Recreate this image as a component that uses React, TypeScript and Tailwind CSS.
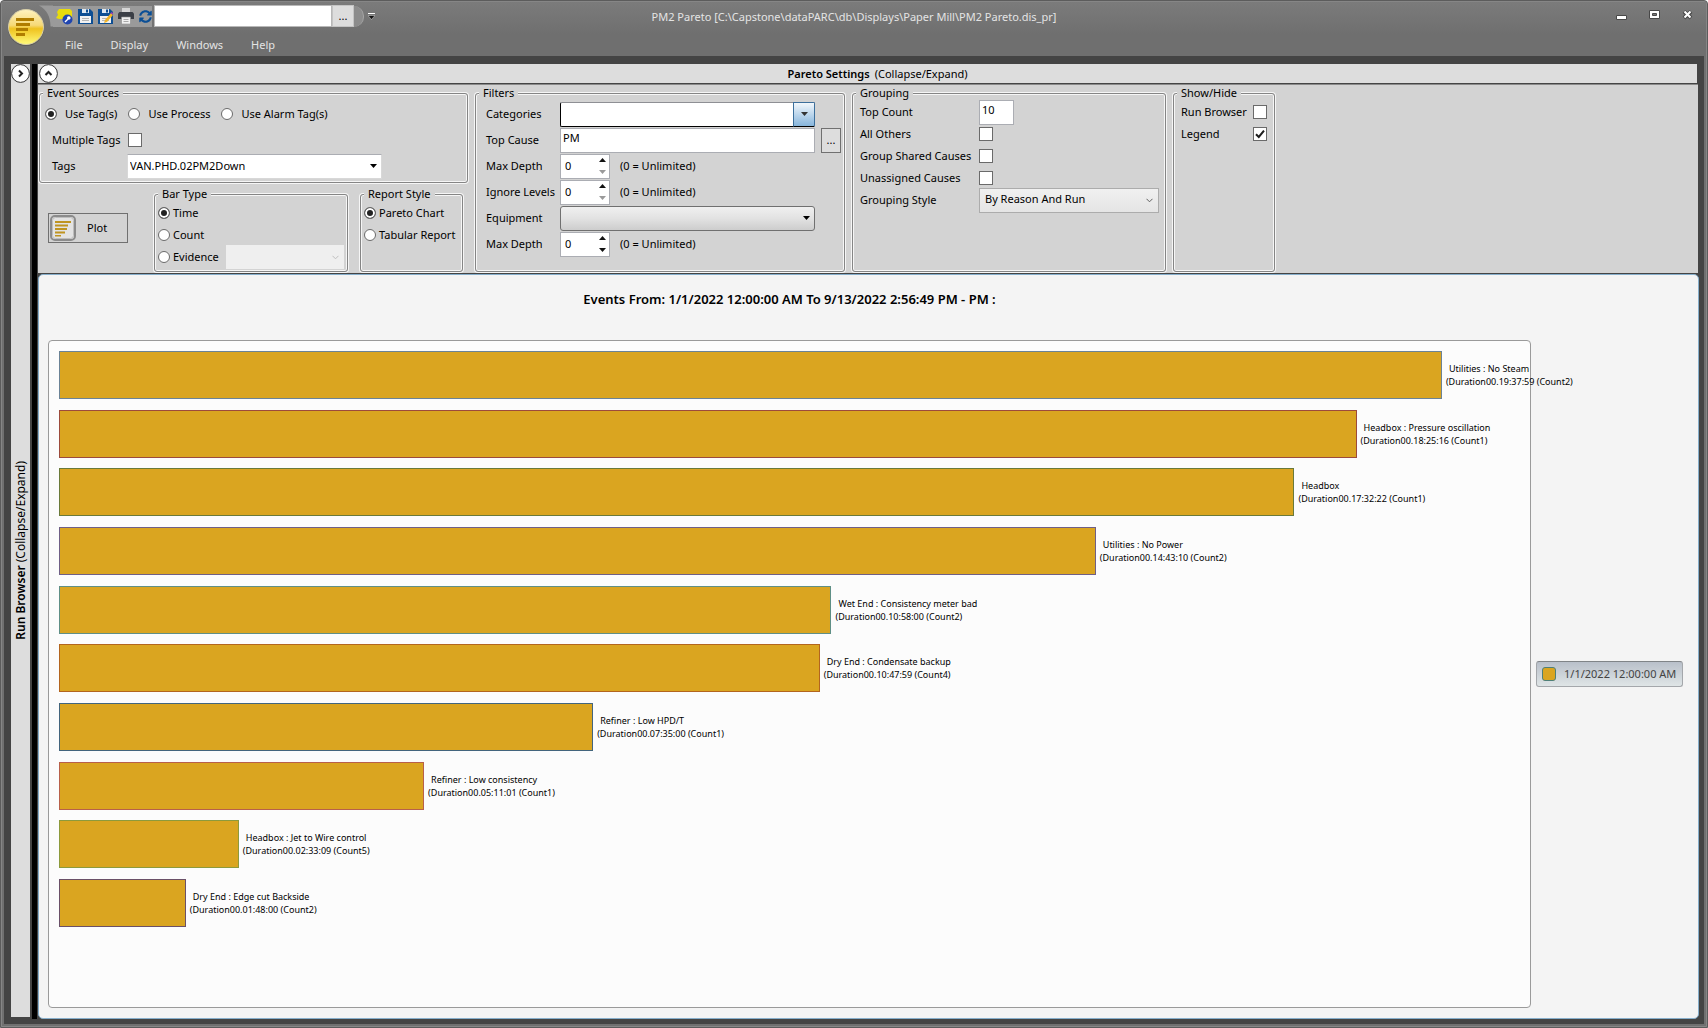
import type { ReactNode } from 'react';
import { FaSyncAlt } from 'react-icons/fa';

const bars = [
    { cause: 'Utilities : No Steam', duration: '19:37:59', count: 2, edge: 'border-[#6b8396]' },
    { cause: 'Headbox : Pressure oscillation', duration: '18:25:16', count: 1, edge: 'border-[#9c4a3c]' },
    { cause: 'Headbox', duration: '17:32:22', count: 1, edge: 'border-[#6a7a3a]' },
    { cause: 'Utilities : No Power', duration: '14:43:10', count: 2, edge: 'border-[#6f5f86]' },
    { cause: 'Wet End : Consistency meter bad', duration: '10:58:00', count: 2, edge: 'border-[#5f8f86]' },
    { cause: 'Dry End : Condensate backup', duration: '10:47:59', count: 4, edge: 'border-[#b3651e]' },
    { cause: 'Refiner : Low HPD/T', duration: '07:35:00', count: 1, edge: 'border-[#43657d]' },
    { cause: 'Refiner : Low consistency', duration: '05:11:01', count: 1, edge: 'border-[#b8604a]' },
    { cause: 'Headbox : Jet to Wire control', duration: '02:33:09', count: 5, edge: 'border-[#8c9a3c]' },
    { cause: 'Dry End : Edge cut Backside', duration: '01:48:00', count: 2, edge: 'border-[#6a5068]' },
];

// seconds that would fill the whole plot width
const AXIS_MAX = 74670;

function seconds(duration: string) {
    const [h, m, s] = duration.split(':').map(Number);
    return h * 3600 + m * 60 + s;
}

const radioClass =
    'appearance-none shrink-0 size-3 rounded-full border border-[#6a6a6a] bg-white checked:bg-[#222] checked:shadow-[inset_0_0_0_2px_#fff]';

interface GroupProps {
    title: string;
    className: string;
    bodyClass: string;
    children: ReactNode;
}

function Group({ title, className, bodyClass, children }: GroupProps) {
    return (
        <fieldset
            className={
                'min-w-0 rounded-[3px] border border-[#858585] shadow-[0_0_0_1px_#f6f6f6,inset_0_0_0_1px_#f6f6f6] ' + className
            }
        >
            <legend className="ml-[3px] px-1 h-4 bg-[#d3d3d3]">{title}</legend>
            <div className={bodyClass}>{children}</div>
        </fieldset>
    );
}

function Radio({ name, label, checked, className }: { name: string; label: string; checked?: boolean; className: string }) {
    return (
        <label className={'flex items-center ' + className}>
            <input type="radio" name={name} defaultChecked={checked} className={radioClass} />
            {label}
        </label>
    );
}

function Check({ id, checked }: { id: string; checked?: boolean }) {
    return (
        <span className="grid w-[14px] h-[14px] shrink-0">
            <input
                type="checkbox"
                id={id}
                defaultChecked={checked}
                className="peer appearance-none col-start-1 row-start-1 border border-[#6a6a6a] bg-white"
            />
            <svg
                viewBox="0 0 14 14"
                className="col-start-1 row-start-1 hidden peer-checked:block pointer-events-none"
                fill="none"
                stroke="#1c1c1c"
                strokeWidth="2"
            >
                <path d="M3 7.2 5.8 10 11 3.6" />
            </svg>
        </span>
    );
}

function Spinner({ id, canDecrease }: { id: string; canDecrease?: boolean }) {
    return (
        <div className="flex w-[50px] h-[25px] border border-[#abadb3] bg-white">
            <input id={id} defaultValue="0" className="flex-1 min-w-0 pl-1 outline-none" />
            <div className="flex flex-col w-[14px]">
                <button type="button" aria-label="Increase" className="flex-1 flex items-center justify-center">
                    <svg width="7" height="4" viewBox="0 0 7 4">
                        <path d="M0 4 3.5 0 7 4z" fill="#111" />
                    </svg>
                </button>
                <button
                    type="button"
                    aria-label="Decrease"
                    className={'flex-1 flex items-center justify-center ' + (canDecrease ? 'text-[#111]' : 'text-[#9a9a9a]')}
                >
                    <Arrow />
                </button>
            </div>
        </div>
    );
}

function Arrow() {
    return (
        <svg width="7" height="4" viewBox="0 0 7 4">
            <path d="M0 0 3.5 4 7 0z" fill="currentColor" />
        </svg>
    );
}

function Chevron() {
    return (
        <svg width="7" height="5" viewBox="0 0 7 5" fill="none" stroke="currentColor">
            <path d="M.5 .8 3.5 3.8 6.5 .8" />
        </svg>
    );
}

interface DropdownProps {
    id: string;
    option?: string;
    disabled?: boolean;
    className: string;
    arrow: ReactNode;
    arrowClass: string;
}

function Dropdown({ id, option = '', disabled, className, arrow, arrowClass }: DropdownProps) {
    return (
        <div className="grid w-fit">
            <select
                id={id}
                aria-label={id}
                disabled={disabled}
                className={'appearance-none col-start-1 row-start-1 outline-none ' + className}
            >
                <option>{option}</option>
            </select>
            <span
                className={
                    'col-start-1 row-start-1 justify-self-end flex items-center justify-center pointer-events-none ' + arrowClass
                }
            >
                {arrow}
            </span>
        </div>
    );
}

function Orb() {
    return (
        <svg width="38" height="38" viewBox="0 0 38 38">
            <defs>
                <linearGradient id="orb" x1="0" y1="0" x2="0" y2="1">
                    <stop offset="0" stopColor="#fff3c0" />
                    <stop offset=".45" stopColor="#f6d977" />
                    <stop offset=".55" stopColor="#efc21f" />
                    <stop offset="1" stopColor="#fffb7a" />
                </linearGradient>
            </defs>
            <circle cx="19" cy="20" r="18" fill="#4c4c4c" opacity=".6" />
            <circle cx="19" cy="19" r="17.5" fill="url(#orb)" stroke="#d8cfa8" />
            <path d="M9 10h18v3H9zM9 15h14v3H9zM9 20h12v3H9zM9 25h9v3H9z" fill="#b07d00" />
        </svg>
    );
}

function OpenIcon() {
    return (
        <svg width="17" height="17" viewBox="0 0 17 17">
            <path d="M3 1h11l2 2v7l-3 1H3L0 10l2-3-1-3z" fill="#e8dc0c" />
            <circle cx="11.500" cy="11.500" r="5" fill="#1f45b0" />
            <circle cx="12.800" cy="10" r="1.800" fill="#fff" />
            <path d="M12 11 9 14" stroke="#fff" strokeWidth="1.400" />
        </svg>
    );
}

function SaveIcon({ edit }: { edit?: boolean }) {
    return (
        <svg width="15" height="16" viewBox="0 0 15 16">
            <path d="M0 1h12l3 3v12H0z" fill="#0e4f94" />
            <path d="M4 1h7v4H4z" fill="#dfe8f0" />
            <path d="M8 1.500h2v3H8z" fill="#0e4f94" />
            <path d="M2 8h11v7H2z" fill="#f2f2f2" />
            <path d="M4 10.500h7M4 12.500h7" stroke="#b5b5b5" />
            {edit && (
                <>
                    <path d="m6 15 1-3 6-7 2 2-6 7z" fill="#f0b429" />
                    <path d="m12.500 5.500 1-1.500 1.500 1v1.500z" fill="#a13fb5" />
                </>
            )}
        </svg>
    );
}

function PrintIcon() {
    return (
        <svg width="16" height="16" viewBox="0 0 16 16">
            <path d="M4 0h8v6H4z" fill="#d6d6d6" />
            <path d="M0 5.500 1.500 4h13L16 5.500V11H0z" fill="#3b3f46" />
            <path d="M3.500 9h9v7h-9z" fill="#f0f0f0" stroke="#8a8a8a" strokeWidth=".6" />
            <path d="M5.500 11.500h5M5.500 13.500h5" stroke="#a8a8a8" />
        </svg>
    );
}

function CircleArrow({ label, path }: { label: string; path: string }) {
    return (
        <button type="button" aria-label={label} className="size-[19px] shrink-0">
            <svg width="19" height="19" viewBox="0 0 19 19" fill="none">
                <circle cx="9.500" cy="9.500" r="8.900" fill="#fff" stroke="#333" />
                <path d={path} stroke="#222" strokeWidth="2" />
            </svg>
        </button>
    );
}

function TitleBar() {
    return (
        <header className="grid grid-cols-[1fr_auto_1fr] h-[54px] bg-linear-to-b from-[#7b7b7b] to-[#6f6f6f] to-60% text-[#e4e4e4]">
            <div className="flex">
                <button type="button" aria-label="Application menu" className="w-[38px] h-[38px] ml-[5px] mt-1.5 shrink-0">
                    <Orb />
                </button>
                <div className="-ml-1.5 mt-[3px] flex flex-col">
                    <div className="flex items-center h-[22px]">
                        <svg width="14" height="22" viewBox="0 0 14 22" className="shrink-0">
                            <path d="M0 .5H14V21.500H11.500C11.500 12 8 4.500 0 .5z" fill="#9a9a9a" />
                        </svg>
                        <div className="flex items-center h-[21px] pl-[3px] gap-[5px] bg-[#9a9a9a]">
                            <button type="button" aria-label="Open">
                                <OpenIcon />
                            </button>
                            <button type="button" aria-label="Save">
                                <SaveIcon />
                            </button>
                            <button type="button" aria-label="Save as">
                                <SaveIcon edit />
                            </button>
                            <button type="button" aria-label="Print">
                                <PrintIcon />
                            </button>
                            <button type="button" aria-label="Refresh">
                                <FaSyncAlt size={13} color="#0b4f96" />
                            </button>
                        </div>
                        <input aria-label="Display path" className="ml-0.5 w-[178px] h-[22px] border border-[#b8b8b8] bg-white text-black" />
                        <button type="button" className="w-[22px] h-[22px] border border-[#c4c4c4] bg-[#dddddd] text-black">
                            ...
                        </button>
                        <span className="w-[10px] h-[21px] rounded-r-full bg-[#8c8c8c] border-r border-[#a5a5a5]"></span>
                        <button type="button" aria-label="Customize toolbar" className="ml-1">
                            <svg width="7" height="7" viewBox="0 0 7 7">
                                <path d="M0 .5h7" stroke="#fff" />
                                <path d="M0 2.500h7L3.500 6.500z" fill="#111" stroke="#ddd" strokeWidth=".5" />
                            </svg>
                        </button>
                    </div>
                    <nav className="flex items-center gap-7 pl-[26px] mt-[10px]">
                        <button type="button">File</button>
                        <button type="button">Display</button>
                        <button type="button">Windows</button>
                        <button type="button">Help</button>
                    </nav>
                </div>
            </div>
            <h1 className="mt-[7px]">PM2 Pareto [C:\Capstone\dataPARC\db\Displays\Paper Mill\PM2 Pareto.dis_pr]</h1>
            <div className="flex justify-end items-start gap-[22px] pt-[7px] pr-[13px]">
                <button type="button" aria-label="Minimize">
                    <svg width="11" height="12" viewBox="0 0 11 12">
                        <path d="M.5 6.500h10v4H.5z" fill="#fff" stroke="#484848" />
                    </svg>
                </button>
                <button type="button" aria-label="Maximize">
                    <svg width="11" height="12" viewBox="0 0 11 12">
                        <path d="M.5 1.500h10v8H.5z" fill="#fff" stroke="#484848" />
                        <path d="M3.500 4.500h4v2h-4z" fill="#777" stroke="#484848" />
                    </svg>
                </button>
                <button type="button" aria-label="Close">
                    <svg width="11" height="12" viewBox="0 0 11 12" fill="none">
                        <path d="M2 2.500 9 9M9 2.500 2 9" stroke="#484848" strokeWidth="4" />
                        <path d="M2.500 2.500 8.500 8.500M8.500 2.500 2.500 8.500" stroke="#fff" strokeWidth="2" />
                    </svg>
                </button>
            </div>
        </header>
    );
}

function RunBrowser() {
    return (
        <aside className="flex flex-col items-center w-[19px] shrink-0 bg-[#dddddd]">
            <CircleArrow label="Expand run browser" path="M8 6.500 11 9.500 8 12.500" />
            <div className="flex-1 flex items-center">
                <p className="[writing-mode:vertical-rl] rotate-180 text-[12px]">
                    <b className="font-semibold">Run Browser</b> (Collapse/Expand)
                </p>
            </div>
        </aside>
    );
}

function EventSources() {
    return (
        <Group title="Event Sources" className="h-[98px]" bodyClass="pl-[5px]">
            <div className="flex items-center h-[26px] gap-[11px]">
                <Radio name="source" label="Use Tag(s)" checked className="gap-2" />
                <Radio name="source" label="Use Process" className="gap-2" />
                <Radio name="source" label="Use Alarm Tag(s)" className="gap-2" />
            </div>
            <div className="flex items-center h-[26px] pl-[7px]">
                <label htmlFor="multiple" className="w-[76px]">
                    Multiple Tags
                </label>
                <Check id="multiple" />
            </div>
            <div className="flex items-center h-[26px] pl-[7px]">
                <label htmlFor="tags" className="w-[75px]">
                    Tags
                </label>
                <Dropdown
                    id="tags"
                    option="VAN.PHD.02PM2Down"
                    className="w-[255px] h-[25px] pl-0.5 bg-white border border-[#d8d8d8] border-t-[#abadb3]"
                    arrow={<Arrow />}
                    arrowClass="w-[18px]"
                />
            </div>
        </Group>
    );
}

function PlotControls() {
    return (
        <div className="flex items-start mt-[3px]">
            <button type="button" className="ml-[9px] mt-[27px] flex items-center w-[80px] h-[30px] pl-px gap-[11px] border border-[#707070]">
                <svg width="26" height="26" viewBox="0 0 26 26">
                    <rect x="1" y="1" width="24" height="24" rx="4" fill="#e3e3e3" stroke="#8b8b8b" strokeWidth="2" />
                    <rect x="2.500" y="2.500" width="21" height="21" rx="3" fill="none" stroke="#bdbdbd" />
                    <path d="M5 6h16v2H5zM5 9.500h13v2H5zM5 13h12v2H5zM5 16.500h10v2H5zM5 20h6v1.500H5z" fill="#bf9420" />
                </svg>
                Plot
            </button>
            <Group title="Bar Type" className="w-[194px] h-[86px] ml-[26px]" bodyClass="pl-[3px]">
                <div className="flex h-[22px]">
                    <Radio name="bar" label="Time" checked className="gap-[3px]" />
                </div>
                <div className="flex h-[22px]">
                    <Radio name="bar" label="Count" className="gap-[3px]" />
                </div>
                <div className="flex h-[22px] items-center">
                    <Radio name="bar" label="Evidence" className="gap-[3px] w-[68px]" />
                    <Dropdown
                        id="evidence"
                        disabled
                        className="w-[118px] h-[24px] bg-[#efefef]"
                        arrow={<Chevron />}
                        arrowClass="w-[18px] text-[#bfbfbf]"
                    />
                </div>
            </Group>
            <Group title="Report Style" className="w-[103px] h-[86px] ml-3" bodyClass="pl-[3px]">
                <div className="flex h-[22px]">
                    <Radio name="report" label="Pareto Chart" checked className="gap-[3px]" />
                </div>
                <div className="flex h-[22px]">
                    <Radio name="report" label="Tabular Report" className="gap-[3px]" />
                </div>
            </Group>
        </div>
    );
}

function Filters() {
    return (
        <Group title="Filters" className="w-[370px] h-[187px]" bodyClass="pl-[10px]">
            <div className="grid grid-cols-[74px_auto_1fr] auto-rows-[26px] items-center">
                <label htmlFor="categories">Categories</label>
                <Dropdown
                    id="categories"
                    className="w-[255px] h-[25px] rounded-[2px] bg-white border border-[#8e8f94] border-l-black border-b-black"
                    arrow={<Arrow />}
                    arrowClass="w-[22px] rounded-r-[2px] border border-[#3c6f9c] border-b-black bg-linear-to-b from-[#f2f7fb] to-[#86b5dc] text-[#333]"
                />
                <span></span>

                <label htmlFor="cause">Top Cause</label>
                <input id="cause" defaultValue="PM" className="w-[255px] h-[25px] pl-0.5 pb-[5px] bg-white border border-[#abadb3] outline-none" />
                <button type="button" className="ml-1.5 w-[20px] h-[25px] border border-[#707070] bg-[#dddddd]">
                    ...
                </button>

                <label htmlFor="depth">Max Depth</label>
                <div className="flex items-center gap-[10px] col-span-2">
                    <Spinner id="depth" />
                    <span>(0 = Unlimited)</span>
                </div>

                <label htmlFor="levels">Ignore Levels</label>
                <div className="flex items-center gap-[10px] col-span-2">
                    <Spinner id="levels" />
                    <span>(0 = Unlimited)</span>
                </div>

                <label htmlFor="equipment">Equipment</label>
                <Dropdown
                    id="equipment"
                    className="w-[255px] h-[25px] rounded-[3px] border border-[#707070] bg-linear-to-b from-[#f0f0f0] from-0% via-[#e2e2e2] via-50% to-[#cdcdcd]"
                    arrow={<Arrow />}
                    arrowClass="w-[18px]"
                />
                <span></span>

                <label htmlFor="equipment-depth">Max Depth</label>
                <div className="flex items-center gap-[10px] col-span-2">
                    <Spinner id="equipment-depth" canDecrease />
                    <span>(0 = Unlimited)</span>
                </div>
            </div>
        </Group>
    );
}

function Grouping() {
    return (
        <Group title="Grouping" className="w-[314px] h-[187px]" bodyClass="pl-[7px]">
            <div className="grid grid-cols-[119px_auto] auto-rows-[22px] items-center">
                <label htmlFor="top">Top Count</label>
                <input id="top" defaultValue="10" className="w-[35px] h-[25px] pl-0.5 pb-[5px] bg-white border border-[#abadb3] outline-none" />
                <label htmlFor="others">All Others</label>
                <Check id="others" />
                <label htmlFor="shared">Group Shared Causes</label>
                <Check id="shared" />
                <label htmlFor="unassigned">Unassigned Causes</label>
                <Check id="unassigned" />
                <label htmlFor="style">Grouping Style</label>
                <Dropdown
                    id="style"
                    option="By Reason And Run"
                    className="w-[180px] h-[25px] pl-[5px] pb-0.5 border border-[#acacac] bg-linear-to-b from-[#f0f0f0] to-[#e5e5e5]"
                    arrow={<Chevron />}
                    arrowClass="w-[20px] text-[#606060]"
                />
            </div>
        </Group>
    );
}

function ShowHide() {
    return (
        <Group title="Show/Hide" className="w-[102px] h-[187px]" bodyClass="pl-[7px]">
            <div className="grid grid-cols-[72px_auto] auto-rows-[22px] items-center">
                <label htmlFor="browser">Run Browser</label>
                <Check id="browser" />
                <label htmlFor="legend">Legend</label>
                <Check id="legend" checked />
            </div>
        </Group>
    );
}

function ParetoChart() {
    return (
        <section className="flex-1 flex rounded-[5px] border border-[#86aecb] bg-[#f4f4f4] pl-[9px] pb-[10px]">
            <div className="flex-1 flex flex-col">
                <h2 className="h-[65px] pt-4 text-center text-[13px] font-semibold">
                    Events From: 1/1/2022 12:00:00 AM To 9/13/2022 2:56:49 PM - PM :
                </h2>
                <div className="flex-1 rounded-[4px] border border-[#9a9a9a] bg-[#fcfcfc] px-[10px] pt-[10px] pb-[80px]">
                    <ul className="h-full min-h-[576px] flex flex-col justify-between">
                        {bars.map((bar) => (
                            <li key={bar.cause} className="flex items-center gap-1 h-12">
                                <div
                                    className={'shrink-0 h-12 border bg-[#daa520] ' + bar.edge}
                                    style={{ width: (seconds(bar.duration) / AXIS_MAX) * 100 + '%' }}
                                ></div>
                                <div className="w-0 whitespace-nowrap text-[9px] leading-[13px]">
                                    <p className="pl-[3px]">{bar.cause}</p>
                                    <p>
                                        (Duration00.{bar.duration} (Count{bar.count})
                                    </p>
                                </div>
                            </li>
                        ))}
                    </ul>
                </div>
            </div>
            <div className="w-[167px] shrink-0 pt-[65px] pl-[5px] flex items-center">
                <button
                    type="button"
                    className="flex items-center gap-2 w-[147px] h-[26px] pl-[5px] rounded-[3px] border border-[#a4a7ab] border-t-[#808488] bg-linear-to-b from-[#b9c0ca] to-[#dfe5e6] text-[#444]"
                >
                    <span className="size-[14px] rounded-[3px] border border-[#4f8078] bg-[#daa520]"></span>
                    1/1/2022 12:00:00 AM
                </button>
            </div>
        </section>
    );
}

function App() {
    return (
        <div className="min-h-screen flex flex-col rounded-t-[4px] border border-[#5c5c5c] bg-[#707070] font-['Noto_Sans','Open_Sans',sans-serif] text-[11px] leading-4 text-black">
            <div className="flex-1 flex flex-col rounded-t-[3px] border border-[#868686]">
                <TitleBar />
                <div className="flex-1 flex mx-0.5 mb-0.5 pt-2 pl-[7px] pr-[5px] bg-[#444]">
                    <div className="flex mb-[7px]">
                        <RunBrowser />
                    </div>
                    <div className="ml-0.5 mb-[5px] w-[5px] shrink-0 bg-black"></div>
                    <main className="flex-1 min-w-0 ml-px mb-[5px] flex flex-col">
                        <div className="flex items-center h-[19px] mr-0.5 pl-px bg-[#dddddd]">
                            <CircleArrow label="Collapse settings" path="M6.500 11 9.500 8 12.500 11" />
                            <p className="flex-1 flex justify-center gap-[5px]">
                                <b className="font-semibold">Pareto Settings</b>
                                <span>(Collapse/Expand)</span>
                            </p>
                        </div>
                        <div className="mt-px mr-px flex items-start gap-[7px] h-[189px] pl-px bg-[#d3d3d3] border-t border-[#8a8a8a]">
                            <div className="w-[429px]">
                                <EventSources />
                                <PlotControls />
                            </div>
                            <Filters />
                            <Grouping />
                            <ShowHide />
                        </div>
                        <div className="mt-px flex-1 flex flex-col">
                            <ParetoChart />
                        </div>
                    </main>
                </div>
            </div>
        </div>
    );
}
export default App;
